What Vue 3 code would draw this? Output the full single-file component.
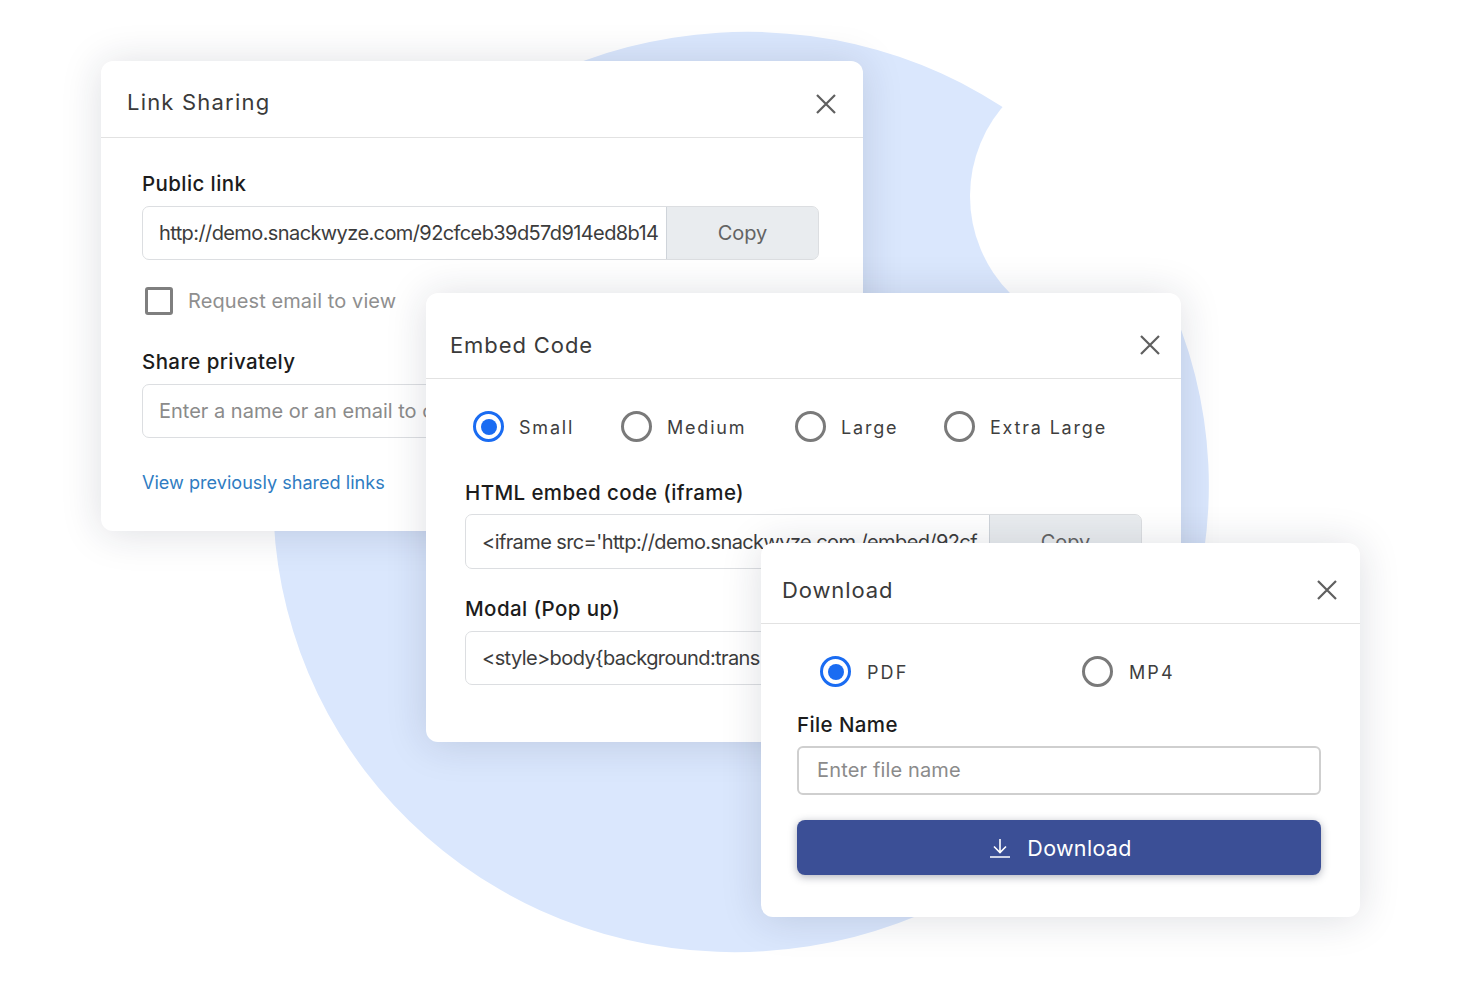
<script setup>
const sizes = [
  { label: 'Small', on: true },
  { label: 'Medium', on: false },
  { label: 'Large', on: false },
  { label: 'Extra Large', on: false },
]
const formats = [
  { label: 'PDF', on: true },
  { label: 'MP4', on: false },
]
</script>

<template>
  <main class="canvas">
    <svg class="blob" width="1481" height="984" viewBox="0 0 1481 984" aria-hidden="true">
      <defs>
        <mask id="bite">
          <rect width="1481" height="984" fill="#fff" />
          <circle cx="1108" cy="196" r="138" fill="#000" />
        </mask>
      </defs>
      <g mask="url(#bite)">
        <ellipse cx="741" cy="492" rx="469" ry="459" fill="#dae7fd" transform="rotate(-20 741 492)" />
      </g>
    </svg>

    <section class="card card-link">
      <header class="head">
        <h2>Link Sharing</h2>
        <svg class="close" viewBox="0 0 20 20"><path d="M1 1l18 18M19 1L1 19" /></svg>
      </header>
      <div class="body">
        <div class="label">Public link</div>
        <div class="group">
          <div class="field">http://demo.snackwyze.com/92cfceb39d57d914ed8b14</div>
          <button class="copy">Copy</button>
        </div>
        <div class="check-row">
          <span class="check"></span>
          <span>Request email to view</span>
        </div>
        <div class="label share">Share privately</div>
        <div class="group">
          <div class="field muted">Enter a name or an email to continue</div>
        </div>
        <a class="link">View previously shared links</a>
      </div>
    </section>

    <section class="card card-embed">
      <header class="head">
        <h2>Embed Code</h2>
        <svg class="close" viewBox="0 0 20 20"><path d="M1 1l18 18M19 1L1 19" /></svg>
      </header>
      <div class="body">
        <div class="radios">
          <div v-for="s in sizes" :key="s.label" class="radio-item">
            <span class="radio" :class="{ on: s.on }"></span>
            <span class="radio-text">{{ s.label }}</span>
          </div>
        </div>
        <div class="label">HTML embed code (iframe)</div>
        <div class="group tall">
          <div class="field">&lt;iframe src='http://demo.snackwyze.com /embed/92cf</div>
          <button class="copy">Copy</button>
        </div>
        <div class="label modal">Modal (Pop up)</div>
        <div class="group">
          <div class="field">&lt;style&gt;body{background:trans</div>
          <button class="copy">Copy</button>
        </div>
      </div>
    </section>

    <section class="card card-download">
      <header class="head">
        <h2>Download</h2>
        <svg class="close" viewBox="0 0 20 20"><path d="M1 1l18 18M19 1L1 19" /></svg>
      </header>
      <div class="body">
        <div class="radios">
          <div v-for="f in formats" :key="f.label" class="radio-item">
            <span class="radio" :class="{ on: f.on }"></span>
            <span class="radio-text">{{ f.label }}</span>
          </div>
        </div>
        <div class="label">File Name</div>
        <div class="name-field">Enter file name</div>
        <button class="primary">
          <svg viewBox="0 0 22 20" width="22" height="20"><path d="M11 1v13M5 8.500l6 6 6-6M1 19h20" /></svg>
          <span>Download</span>
        </button>
      </div>
    </section>
  </main>
</template>

<style>
html, body { background: #fff; }
</style>

<style scoped>
.canvas {
  position: relative;
  width: 1481px;
  height: 984px;
  overflow: hidden;
  background: #fff;
  font-family: Inter, "Liberation Sans", sans-serif;
  color: #3b3b3b;
}
.blob { position: absolute; inset: 0; }

.card {
  position: absolute;
  background: #fff;
  border-radius: 12px;
  box-shadow: 0 2px 40px rgba(30, 35, 60, 0.15);
  overflow: hidden;
}
.card-link { left: 101px; top: 61px; width: 762px; height: 470px; }
.card-embed { left: 426px; top: 293px; width: 755px; height: 449px; }
.card-download { left: 761px; top: 543px; width: 599px; height: 374px; }

.head {
  display: flex;
  align-items: center;
  justify-content: space-between;
  box-sizing: border-box;
  border-bottom: 1.5px solid #e2e2e2;
}
h2 {
  margin: 0;
  font-size: 22px;
  line-height: 28px;
  font-weight: 400;
  letter-spacing: 0.9px;
  color: #3a3a3a;
}
.close { width: 20px; height: 20px; flex: none; }
.close path { fill: none; stroke: #5f5f5f; stroke-width: 2.2; }

.card-link .head { height: 77px; padding: 5px 27px 0 26px; }
.card-link h2 { letter-spacing: 1.2px; }
.card-embed .head { height: 86px; padding: 19px 21px 0 24px; }
.card-download .head { height: 81px; padding: 13px 23px 0 21px; }
.card-link .close { margin-top: 4px; }

.label {
  font-size: 20.5px;
  line-height: 24px;
  color: #1c1c1c;
  font-weight: 500;
  letter-spacing: 0.4px;
}
.group {
  display: flex;
  height: 54px;
  margin-top: 10px;
  box-sizing: border-box;
  border: 1px solid #dcdee1;
  border-radius: 7px;
  overflow: hidden;
}
.group.tall { height: 55px; margin-top: 9px; }
.field {
  flex: 1;
  min-width: 0;
  padding: 0 7px 0 16px;
  font-size: 20px;
  line-height: 52px;
  letter-spacing: -0.6px;
  white-space: nowrap;
  overflow: hidden;
  color: #3c3c3c;
}
.group.tall .field { line-height: 54px; }
.field.muted { color: #8b8b8b; letter-spacing: 0; }
.copy {
  flex: none;
  width: 153px;
  margin: -1px -1px -1px 0;
  border: 1px solid #cfd4da;
  border-radius: 0 7px 7px 0;
  background: #e9ecef;
  font: inherit;
  font-size: 20px;
  color: #636363;
  padding: 0;
}

.card-link .body { padding: 34px 44px 0 41px; }
.check-row {
  display: flex;
  align-items: center;
  gap: 15px;
  margin: 27px 0 0 3px;
  font-size: 20px;
  line-height: 28px;
  letter-spacing: 0.1px;
  color: #8f8f8f;
}
.check {
  width: 28px;
  height: 28px;
  box-sizing: border-box;
  border: 3px solid #7f7f7f;
  border-radius: 3px;
}
.label.share { margin-top: 35px; }
.link {
  display: block;
  margin-top: 32px;
  font-size: 18.100px;
  line-height: 24px;
  color: #2f7cc2;
}

.radios { display: grid; align-items: center; }
.radio-item {
  display: flex;
  align-items: center;
  gap: 15px;
  font-size: 18px;
  letter-spacing: 1.8px;
  color: #3e3e3e;
  white-space: nowrap;
}
.radio-text { padding-top: 2px; }
.radio {
  position: relative;
  flex: none;
  width: 31px;
  height: 31px;
  box-sizing: border-box;
  border: 3.5px solid #7a7a7a;
  border-radius: 50%;
}
.radio.on { border-color: #1a6cf2; }
.radio.on::after {
  content: "";
  position: absolute;
  left: 50%;
  top: 50%;
  width: 16px;
  height: 16px;
  border-radius: 50%;
  background: #1a6cf2;
  transform: translate(-50%, -50%);
}

.card-embed .body { padding: 32px 39px 0 39px; }
.card-embed .radios {
  grid-template-columns: 148px 174px 149px auto;
  margin-left: 8px;
  margin-bottom: 39px;
}
.label.modal { margin-top: 28px; }

.card-download .body { padding: 32px 39px 0 36px; }
.card-download .radios {
  grid-template-columns: 262px auto;
  margin-left: 23px;
  margin-bottom: 26px;
}
.card-download .radio-text { margin-left: 1px; letter-spacing: 2.1px; }
.name-field {
  height: 49px;
  margin-top: 9px;
  box-sizing: border-box;
  border: 2px solid #cfcfcf;
  border-radius: 6px;
  padding-left: 18px;
  font-size: 20px;
  line-height: 45px;
  letter-spacing: 0.15px;
  color: #8b8b8b;
}
.primary {
  display: flex;
  align-items: center;
  justify-content: center;
  gap: 16px;
  width: 100%;
  height: 55px;
  margin-top: 25px;
  padding: 0 0 0 3px;
  border: 0;
  border-radius: 8px;
  background: #3b4f96;
  box-shadow: 0 2px 8px rgba(30, 35, 60, 0.35);
  font: inherit;
  font-size: 21.500px;
  letter-spacing: 0.3px;
  color: #fff;
}
.primary path { fill: none; stroke: #fff; stroke-width: 1.600; }
</style>
